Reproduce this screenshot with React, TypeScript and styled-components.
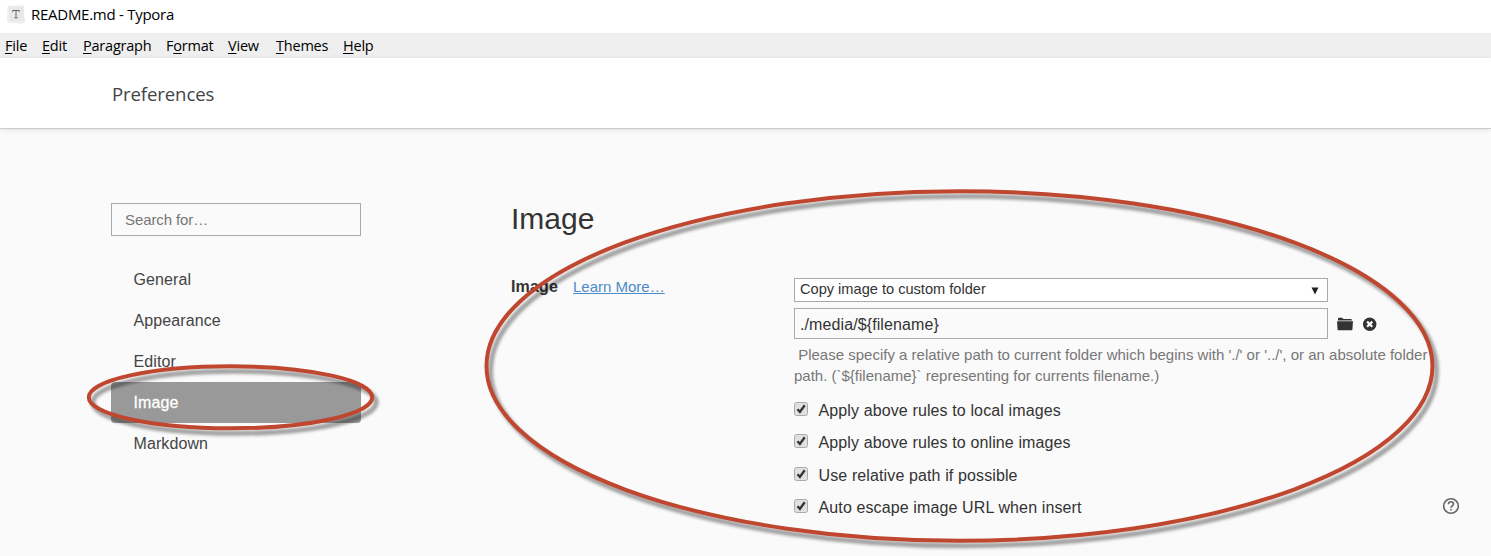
import React from 'react';
import styled, { createGlobalStyle } from 'styled-components';

const GlobalStyle = createGlobalStyle`
  * { box-sizing: border-box; }
  body {
    margin: 0;
    background: #fafafa;
    color: #333;
    font-family: "Liberation Sans", Arial, sans-serif;
    font-size: 16px;
    overflow: hidden;
  }
`;

const Window = styled.div`
  position: relative;
  display: flex;
  flex-direction: column;
  height: 556px;
  overflow: hidden;
`;

const TitleBar = styled.header`
  display: flex;
  align-items: flex-start;
  gap: 6px;
  height: 33px;
  padding: 3px 0 0 7px;
  background: #fff;
  color: #000;
  font: 15px/22px "Open Sans", "Noto Sans", sans-serif;
`;

const AppIcon = styled.svg`
  margin-top: 2px;
`;

const TitleText = styled.span`
  letter-spacing: -0.27px;
`;

const MenuBar = styled.nav`
  display: flex;
  height: 25px;
  padding-left: 5px;
  background: #efefef;
  color: #000;
  font: 14.5px/25px "Open Sans", "Noto Sans", sans-serif;
`;

const MenuItem = styled.span<{ $width: number }>`
  width: ${(p) => p.$width}px;
  letter-spacing: -0.22px;
  white-space: nowrap;
`;

const Mnemonic = styled.span`
  text-decoration: underline;
  text-decoration-thickness: 1px;
  text-underline-offset: 2px;
`;

const PageHeader = styled.div`
  flex: none;
  height: 71px;
  padding: 22px 0 0 112px;
  background: #fff;
  border-bottom: 1px solid #ccc;
  box-shadow: 0 1px 5px rgba(0, 0, 0, 0.1);
  font: 18.6px/28px "Open Sans", "Noto Sans", sans-serif;
`;

const PageTitle = styled.span`
  color: #444;
  letter-spacing: -0.12px;
`;

const Content = styled.div`
  display: flex;
  flex: 1;
  padding: 74px 0 0 111px;
`;

const Sidebar = styled.aside`
  flex: none;
  width: 250px;
  margin-right: 150px;
`;

const SearchBox = styled.div`
  height: 33px;
  margin-bottom: 23px;
  padding-left: 13px;
  border: 1px solid #a9a9a9;
  color: #777;
  font-size: 15px;
  letter-spacing: -0.1px;
  line-height: 32px;
`;

const NavItem = styled.div<{ $active?: boolean }>`
  height: 41px;
  padding-left: 22.5px;
  border-radius: 4px;
  line-height: 41px;
  letter-spacing: 0.1px;
  color: ${(p) => (p.$active ? '#fff' : '#444')};
  background: ${(p) => (p.$active ? '#999' : 'transparent')};
  -webkit-text-stroke: ${(p) => (p.$active ? '0.3px #fff' : '0')};
`;

const Main = styled.main`
  width: 930px;
`;

const Heading = styled.h1`
  margin: -2px 0 41px;
  font-size: 30px;
  font-weight: 400;
  line-height: 36px;
`;

const Setting = styled.section`
  display: flex;
`;

const SettingLabel = styled.div`
  display: flex;
  gap: 15px;
  width: 283px;
  line-height: 18px;
`;

const SettingName = styled.b`
  letter-spacing: 0.15px;
`;

const Link = styled.a`
  color: #4a8bc9;
  font-size: 15px;
  text-decoration: underline;
`;

const Fields = styled.div`
  flex: 1;
`;

const Select = styled.div`
  display: flex;
  justify-content: space-between;
  width: 534px;
  height: 24px;
  padding: 0 8px 0 5px;
  border: 1px solid #a9a9a9;
  background: #fff;
  font-size: 14.6px;
  line-height: 20px;
`;

const Arrow = styled.svg`
  width: 8px;
  height: 8px;
  margin-top: 8px;
`;

const PathRow = styled.div`
  display: flex;
  align-items: center;
  margin-top: 6px;
`;

const PathInput = styled.div`
  width: 534px;
  height: 31px;
  margin-right: 9px;
  padding-left: 5px;
  border: 1px solid #a9a9a9;
  line-height: 31px;
  letter-spacing: 0.1px;
`;

const Icon = styled.svg`
  display: block;
  flex: none;
  margin-right: 10px;
`;

const Hint = styled.p`
  margin: 5px 0 13px;
  color: #777;
  font-size: 15px;
  line-height: 21px;
  white-space: pre;
`;

const CheckRow = styled.div`
  display: flex;
  height: 32.3px;
  line-height: 24px;
  letter-spacing: 0.12px;
`;

const CheckMark = styled.svg`
  width: 14px;
  height: 14px;
  margin: 3px 10.5px 0 0;
`;

const Help = styled.svg`
  position: absolute;
  left: 1442px;
  top: 497px;
`;

const Annotation = styled.svg`
  position: absolute;
  inset: 0;
  pointer-events: none;
`;

const menus: [string, string, string, number][] = [
  ['', 'F', 'ile', 37],
  ['', 'E', 'dit', 41],
  ['', 'P', 'aragraph', 83],
  ['F', 'o', 'rmat', 62],
  ['', 'V', 'iew', 48],
  ['', 'T', 'hemes', 67],
  ['', 'H', 'elp', 40],
];

const sections = ['General', 'Appearance', 'Editor', 'Image', 'Markdown'];

const rules = [
  'Apply above rules to local images',
  'Apply above rules to online images',
  'Use relative path if possible',
  'Auto escape image URL when insert',
];

const Ring = ({ cx, cy, rx, ry }: { cx: number; cy: number; rx: number; ry: number }) => (
  <>
    <ellipse cx={cx + 4} cy={cy + 5} rx={rx} ry={ry} fill="none" stroke="#000" strokeOpacity="0.36" strokeWidth="5" filter="url(#soft)" />
    <ellipse cx={cx} cy={cy} rx={rx} ry={ry} fill="none" stroke="#c0472f" strokeWidth="4" />
  </>
);

export default function App() {
  return (
    <Window>
      <GlobalStyle />
      <TitleBar>
        <AppIcon width="18" height="19" viewBox="0 0 18 19">
          <path d="M1 1.5 16 .8 17.5 17 14.5 18 .7 16.8Z" fill="#f7f7f7" stroke="#e2e2e2" strokeWidth=".7" />
          <rect x="2" y="1.5" width="15" height="15" rx="1" fill="#e9e9e9" />
          <path d="M5.7 7V5.5h6.6V7M9 5.5v7M7.4 12.8h3.2" fill="none" stroke="#666" />
        </AppIcon>
        <TitleText>README.md - Typora</TitleText>
      </TitleBar>
      <MenuBar>
        {menus.map(([pre, key, post, width]) => (
          <MenuItem key={key + post} $width={width}>
            {pre}<Mnemonic>{key}</Mnemonic>{post}
          </MenuItem>
        ))}
      </MenuBar>
      <PageHeader><PageTitle>Preferences</PageTitle></PageHeader>
      <Content>
        <Sidebar>
          <SearchBox>Search for…</SearchBox>
          {sections.map((name) => (
            <NavItem key={name} $active={name === 'Image'}>{name}</NavItem>
          ))}
        </Sidebar>
        <Main>
          <Heading>Image</Heading>
          <Setting>
            <SettingLabel>
              <SettingName>Image</SettingName>
              <Link>Learn More…</Link>
            </SettingLabel>
            <Fields>
              <Select>
                Copy image to custom folder
                <Arrow viewBox="0 0 8 8"><path d="M.5 .5h7L4 7.5Z" fill="#222" /></Arrow>
              </Select>
              <PathRow>
                <PathInput>./media/${'{filename}'}</PathInput>
                <Icon width="16" height="14" viewBox="0 0 16 14">
                  <path d="M1 3.4V1.5Q1 .8 1.7.8h3.5l1.2 1.2h7.6q.8 0 .8.8v.6ZM0 4.2h16l-.6 8.4q0 .6-.7.6H1.3q-.7 0-.7-.6Z" fill="#333" />
                </Icon>
                <Icon width="14" height="14" viewBox="0 0 14 14">
                  <circle cx="6.7" cy="7.2" r="6.7" fill="#333" />
                  <path d="m4.1 4.6 5.2 5.2m0-5.2L4.1 9.8" stroke="#fafafa" strokeWidth="2.2" />
                </Icon>
              </PathRow>
              <Hint>{" Please specify a relative path to current folder which begins with './' or '../', or an absolute folder\npath. (`${filename}` representing for currents filename.)"}</Hint>
              {rules.map((rule) => (
                <CheckRow key={rule}>
                  <CheckMark viewBox="0 0 14 14">
                    <rect x=".5" y=".5" width="13" height="13" rx="2" fill="#e0e0e0" stroke="#aaa" />
                    <path d="m3.5 7.3 2.4 2.6 4.8-6.6" fill="none" stroke="#333" strokeWidth="2.3" />
                  </CheckMark>
                  {rule}
                </CheckRow>
              ))}
            </Fields>
          </Setting>
        </Main>
      </Content>
      <Help width="18" height="18" viewBox="0 0 18 18" fill="none" stroke="#666" strokeWidth="1.6">
        <circle cx="9" cy="9" r="7.3" />
        <path d="M6.5 7.2C6.5 3.8 11.5 4 11.5 7c0 1.8-2.5 1.9-2.5 3.8M9 12v1.6" />
      </Help>
      <Annotation width="1491" height="556" viewBox="0 0 1491 556">
        <filter id="soft" x="-5%" y="-20%" width="110%" height="140%"><feGaussianBlur stdDeviation="1.5" /></filter>
        <Ring cx={230.5} cy={397.3} rx={141.7} ry={31} />
        <Ring cx={959.5} cy={366} rx={473} ry={174.7} />
      </Annotation>
    </Window>
  );
}
